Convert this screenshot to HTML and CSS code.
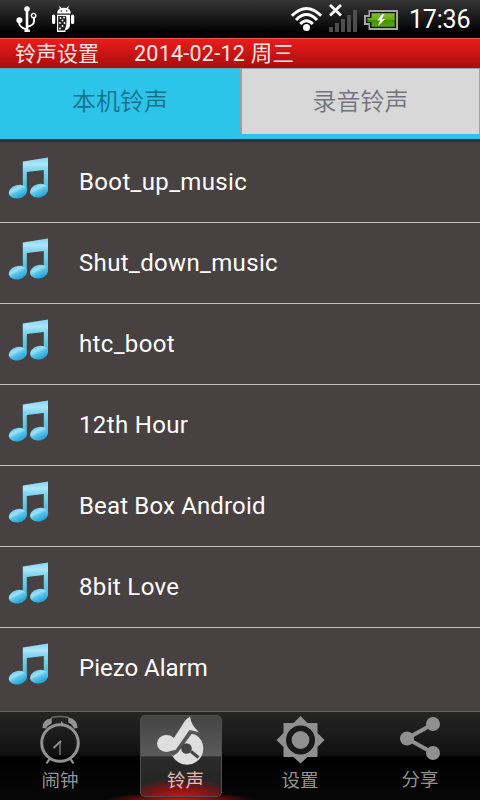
FILE: index.html
```html
<!DOCTYPE html>
<html lang="zh-CN">
<head>
<meta charset="utf-8">
<title>铃声设置</title>
<link rel="stylesheet" href="styles.css">
</head>
<body>
<svg width="0" height="0" class="defs">
  <defs>
    <linearGradient id="beam" x1="0" y1="0" x2="0" y2="1">
      <stop offset="0" stop-color="#7fd5f1"/><stop offset=".2" stop-color="#aee6f7"/><stop offset=".36" stop-color="#82d6f1"/><stop offset="1" stop-color="#45b9e2"/>
    </linearGradient>
    <linearGradient id="head" x1="0" y1="0" x2=".3" y2="1">
      <stop offset="0" stop-color="#5cc8ee"/><stop offset=".4" stop-color="#9ce0f7"/><stop offset=".6" stop-color="#58c5ea"/><stop offset="1" stop-color="#2ba6d8"/>
    </linearGradient>
    <linearGradient id="batt" x1="0" y1="0" x2="0" y2="1">
      <stop offset="0" stop-color="#7fbd2c"/><stop offset=".5" stop-color="#66ad12"/><stop offset=".5" stop-color="#438e04"/><stop offset="1" stop-color="#5aa60d"/>
    </linearGradient>
    <symbol id="note" viewBox="0 0 42 44">
      <path d="M14.800 5.500 40 1.500V34H35.800V14L18.800 16V35H14.800Z" fill="url(#beam)"/>
      <ellipse cx="9.900" cy="35.700" rx="9.200" ry="6.700" transform="rotate(-14 9.900 35.700)" fill="url(#head)"/>
      <ellipse cx="31.100" cy="34.700" rx="9.200" ry="6.700" transform="rotate(-14 31.100 34.700)" fill="url(#head)"/>
    </symbol>
  </defs>
</svg>
<div class="screen">
  <div class="status">
    <svg class="usb" width="22" height="28" viewBox="0 0 22 28">
      <g fill="none" stroke="#fff" stroke-width="2"><path d="M11 4V26" stroke-width="2.6"/><path d="M3.2 15V17.5Q3.5 21 10.5 23.5M18 12V15.5Q17.5 19.5 12 20.5"/><circle cx="17.6" cy="9.6" r="2.2" stroke-width="1.4"/></g>
      <g fill="#fff"><circle cx="11" cy="3" r="2.8"/><circle cx="3.4" cy="14.2" r="3"/><rect x="8.5" y="23.5" width="5.3" height="2.5"/></g>
    </svg>
    <svg class="robot" width="24" height="28" viewBox="0 0 24 28">
      <g fill="#fff"><path d="M5.2 7.5Q5.5 3.5 8 2.6L7 .8 8 .3 9.3 2Q12 1.4 14.6 2L16 .3 17 .8 16 2.6Q18.5 3.5 18.8 7.5Z"/><rect x="0" y="8.5" width="3.2" height="9.500" rx="1.5"/><rect x="19" y="8.5" width="3.200" height="9.500" rx="1.5"/><path d="M5 8.7H18V20Q16.500 24 13.5 24V26H5Z"/></g>
      <path d="M6.2 10H14Q15.500 18 12.500 24.500H6.200Z" fill="#202020"/>
      <g fill="#fff"><circle cx="8.5" cy="12" r=".9"/><circle cx="12" cy="11.5" r=".9"/><circle cx="10.5" cy="14.5" r=".9"/><circle cx="8" cy="17" r=".9"/><circle cx="12.5" cy="17" r=".9"/><circle cx="10.5" cy="20" r=".9"/><circle cx="8" cy="22.500" r=".9"/></g>
      <g fill="#222"><circle cx="9.2" cy="5" r=".8"/><circle cx="14.8" cy="5" r=".8"/></g>
    </svg>
    <span class="spacer"></span>
    <svg class="wifi" width="34" height="28" viewBox="0 0 34 28">
      <g fill="none" stroke="#fff" stroke-width="3"><path d="M1.8 9.8Q16.5-5 31.2 9.8"/><path d="M6 14Q16.5 3.2 27 14"/><path d="M10.2 18Q16.5 11.6 22.8 18"/></g><circle cx="16.5" cy="21.400" r="3.5" fill="#fff"/>
    </svg>
    <svg class="signal" width="30" height="30" viewBox="0 0 30 30">
      <g fill="#4d4d4d"><rect x="1" y="24" width="4" height="5"/><rect x="7" y="20" width="4" height="9"/><rect x="13" y="16" width="4" height="13"/><rect x="19" y="12" width="4" height="17"/><rect x="25" y="7" width="4" height="22"/></g>
      <path d="M2 2 13 12.500M13 2 2 12.500" stroke="#fff" stroke-width="2.8"/>
    </svg>
    <svg class="battery" width="34" height="20" viewBox="0 0 34 20">
      <path d="M4.500 0H34V20H4.500V15H0V5H4.500Z" fill="#a6a6a6"/><path d="M6 2H32V18H6V13H2V7H6Z" fill="#111"/><path d="M7.500 3.300H30.700V16.700H7.500V12H3.300V8H7.500Z" fill="url(#batt)"/><path d="M18.500 4 13 10.500 16.200 10.200 14 16 21.200 9 17.600 9.200 20.500 4Z" fill="#fff"/>
    </svg>
    <span class="time">17:36</span>
  </div>
  <header class="title"><span class="name">铃声设置</span><span class="date">2014-02-12 周三</span></header>
  <div class="tabs"><div class="tab active">本机铃声</div><div class="tab">录音铃声</div></div>
  <main class="list">
    <div class="row"><svg class="note"><use href="#note"/></svg><span class="song">Boot_up_music</span></div>
    <div class="row"><svg class="note"><use href="#note"/></svg><span class="song">Shut_down_music</span></div>
    <div class="row"><svg class="note"><use href="#note"/></svg><span class="song">htc_boot</span></div>
    <div class="row"><svg class="note"><use href="#note"/></svg><span class="song">12th Hour</span></div>
    <div class="row"><svg class="note"><use href="#note"/></svg><span class="song tight">Beat Box Android</span></div>
    <div class="row"><svg class="note"><use href="#note"/></svg><span class="song">8bit Love</span></div>
    <div class="row"><svg class="note"><use href="#note"/></svg><span class="song plain">Piezo Alarm</span></div>
  </main>
  <nav class="nav">
    <div class="item">
      <svg class="icon" width="50" height="52" viewBox="0 0 50 52">
        <g fill="none" stroke="#929292"><circle cx="25" cy="29" r="18.300" stroke-width="3"/><path d="M16 9V4.500Q17 2.500 25 2.500T34 4.500V9" stroke="#666" stroke-width="1.500"/><path d="M14.500 45 11.500 49.500M35.500 45 38.500 49.500" stroke-width="2.200"/><path d="M25 41V28" stroke="#777" stroke-width="1.500"/><path d="M26 27 18.500 34" stroke-width="1.800"/></g>
        <path d="M7.500 14Q7.500 5 16.500 4.500V9.500Q13 11 11 14.500ZM42.500 14Q42.500 5 33.500 3.500V8.500Q37 10 39 14.500Z" fill="#929292"/><path d="M26 7 30 11H26Z" fill="#929292"/>
      </svg>
      <span class="label">闹钟</span>
    </div>
    <div class="item selected">
      <svg class="icon" width="50" height="52" viewBox="0 0 50 52">
        <circle cx="31" cy="33.500" r="16.300" fill="#dedede"/>
        <path d="M14 37 31 12 44 17V20L35.500 19 22 37.500 17 41Z" fill="#555"/>
        <ellipse cx="10.500" cy="28.500" rx="9.500" ry="8.500" fill="#dedede"/><path d="M17 24.500 29.500 5 34 1.500Q35 10 42.800 17L33.500 15 19.500 35 13 36Z" fill="#dedede"/>
        <circle cx="30.500" cy="33.500" r="5.300" fill="#444"/><path d="M35 36.500 42.500 42.500" stroke="#444" stroke-width="3"/>
      </svg>
      <span class="label">铃声</span>
    </div>
    <div class="item">
      <svg class="icon" width="50" height="52" viewBox="0 0 50 52">
        <path d="M25.500 2 32.500 9H42.500V19L49.500 26 42.500 33V43H32.500L25.500 49.500 18.500 43H8.500V33L1.500 26 8.500 19V9H18.500Z" fill="#909090"/><circle cx="25.500" cy="26" r="11.700" fill="none" stroke="#191919" stroke-width="5.600"/>
      </svg>
      <span class="label">设置</span>
    </div>
    <div class="item">
      <svg class="icon" width="50" height="52" viewBox="0 0 50 52">
        <path d="M38 10 12 24.500 38 39" fill="none" stroke="#909090" stroke-width="4"/><g fill="#909090"><circle cx="38" cy="10" r="7"/><circle cx="12" cy="24.500" r="7"/><circle cx="38" cy="39" r="7"/></g>
      </svg>
      <span class="label share">分享</span>
    </div>
  </nav>
</div>
</body>
</html>
```
FILE: styles.css
```css
* { box-sizing: border-box; }
body { margin: 0; background: #484141; font-family: Roboto, "Noto Sans CJK SC", sans-serif; }
svg { display: block; flex: none; }
.defs { position: absolute; }
.screen { display: flex; flex-direction: column; width: 480px; height: 800px; overflow: hidden; }
.status { display: flex; align-items: flex-start; flex: none; height: 38px; padding-right: 9px; background: linear-gradient(#353535, #1b1b1b 45%, #000 85%); color: #fff; }
.usb { margin: 6px 0 0 16px; }
.robot { margin: 6px 0 0 14px; }
.spacer { flex: 1; }
.wifi { margin: 6px 1px 0 0; }
.signal { margin: 3px 0 0 3px; }
.battery { margin: 10px 0 0 6px; }
.time { width: 62px; margin-left: 11px; font-size: 25px; line-height: 40px; letter-spacing: -.2px; white-space: nowrap; }
.title { display: flex; flex: none; height: 30px; padding-left: 15px; border-top: 1px solid #ef5a50; background: linear-gradient(#e91c1c, #a90d0d); color: #fbe8e4; font-size: 21px; line-height: 30px; white-space: nowrap; }
.name { width: 119px; }
.date { font-size: 21.500px; letter-spacing: .25px; }
.tabs { display: flex; flex: none; height: 74px; padding-bottom: 1px; border-bottom: 3px solid #283439; background: #2dc4ea; }
.tab { flex: 1; height: 66px; border: solid #a0a0a0; border-width: 1px 1px 0 2px; background: #d8d8d8; color: #72727c; font-size: 24px; font-weight: 350; line-height: 67px; text-align: center; }
.tab.active { flex: 0 0 240px; height: 70px; border-width: 1px 0 0; border-color: #5aa8bd; background: #2dc4ea; color: #15708c; }
.list { flex: 1; min-height: 0; overflow: hidden; background: #484141; }
.row { display: flex; align-items: center; height: 81px; padding-left: 8px; border-bottom: 1px solid #c4c0c0; color: #fff; }
.row:last-child { border-bottom-color: transparent; }
.note { width: 42px; height: 44px; margin: -8px 29px 0 0; }
.song { font-size: 24px; line-height: 30px; letter-spacing: .35px; white-space: nowrap; }
.tight { letter-spacing: .15px; }
.plain { letter-spacing: 0; }
.nav { display: flex; flex: none; height: 89px; border-top: 1px solid #686262; background: radial-gradient(ellipse 75px 8px at 180px 88px, #d81414, transparent), linear-gradient(#252525, #111 48%, #000 52%, #070707); }
.item { display: flex; flex: 1; flex-direction: column; align-items: center; color: #929292; }
.item .icon { margin-top: 2px; }
.label { margin-top: 1px; font-size: 18.500px; line-height: 28px; }
.share { margin-top: 0; }
.selected { flex: 0 0 82px; height: 82px; margin: 3px 18px 0 20px; border: 1px solid #505050; border-radius: 5px; background: radial-gradient(ellipse 60px 22px at 50% 105%, #e51717, #8a1414 50%, transparent), linear-gradient(#454545, #5a5a5a 50%, #2b2b2b 51%, #222); color: #e4b9b7; }
.selected .icon { margin: -1px 0 0 -1px; }
.selected .label { margin-top: 0; padding-left: 9px; }
```
